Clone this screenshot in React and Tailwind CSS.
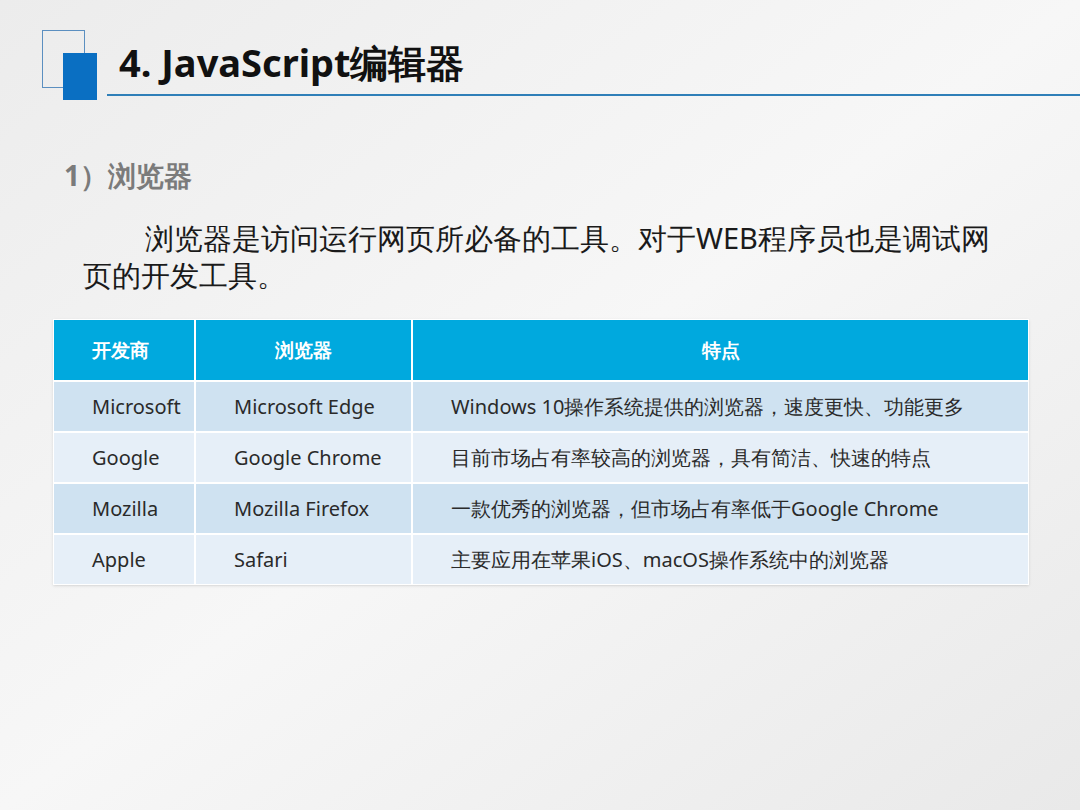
const rows = [
  ['Microsoft', 'Microsoft Edge', 'Windows 10操作系统提供的浏览器，速度更快、功能更多'],
  ['Google', 'Google Chrome', '目前市场占有率较高的浏览器，具有简洁、快速的特点'],
  ['Mozilla', 'Mozilla Firefox', '一款优秀的浏览器，但市场占有率低于Google Chrome'],
  ['Apple', 'Safari', '主要应用在苹果iOS、macOS操作系统中的浏览器'],
];

const sans = "font-['Open_Sans','Noto_Sans_CJK_SC',sans-serif]";
const serif = "font-['Liberation_Serif','Noto_Sans_CJK_SC',serif]";

export default function App() {
  return (
    <div className="w-[1080px] h-[810px] overflow-hidden bg-gradient-to-br from-[#ececec] via-[#f7f7f7] to-[#e9e9e9]">
      {/* Header */}
      <div className="relative h-[100px]">
        <div className="absolute left-[42px] top-[30px] w-[43px] h-[58px] border border-[#5b8fc0]" />
        <div className="absolute left-[63px] top-[53px] w-[34px] h-[47px] bg-[#0a6fc2]" />
        <div className="absolute left-[107px] right-0 top-[94px] h-[2px] bg-[#2f7fb8]" />
        <div className={`${sans} pl-[119px] pt-[37px] text-[38px] leading-[50px] font-bold text-[#111]`}>
          4. JavaScript编辑器
        </div>
      </div>

      <div className={`${sans} pl-[64px] mt-[55px] text-[28px] leading-[40px] font-bold text-[#7b7b7b]`}>1）浏览器</div>

      <div className={`${sans} pl-[83px] pr-[80px] mt-[24px] text-[29px] leading-[37px] text-[#1a1a1a] indent-[62px]`}>
        浏览器是访问运行网页所必备的工具。对于WEB程序员也是调试网页的开发工具。
      </div>

      {/* Table */}
      <div className="ml-[53px] mt-[26px] w-[976px] bg-white p-[1px] shadow-sm">
        <div className="grid grid-cols-[140px_215px_1fr] gap-[2px] bg-white">
          <div className={`${sans} h-[60px] bg-[#00a9de] flex items-center pl-[38px] text-white font-bold text-[19px]`}>开发商</div>
          <div className={`${sans} h-[60px] bg-[#00a9de] flex items-center justify-center text-white font-bold text-[19px]`}>浏览器</div>
          <div className={`${sans} h-[60px] bg-[#00a9de] flex items-center justify-center text-white font-bold text-[19px]`}>特点</div>
          {rows.map((r, i) => {
            const bg = i % 2 === 0 ? 'bg-[#cfe2f1]' : 'bg-[#e6eff8]';
            return r.map((c, j) => (
              <div key={i + '-' + j} className={`${bg} ${serif} h-[49px] flex items-center pl-[38px] text-[20px] text-[#2a2a2a]`}>{c}</div>
            ));
          })}
        </div>
      </div>
    </div>
  );
}
